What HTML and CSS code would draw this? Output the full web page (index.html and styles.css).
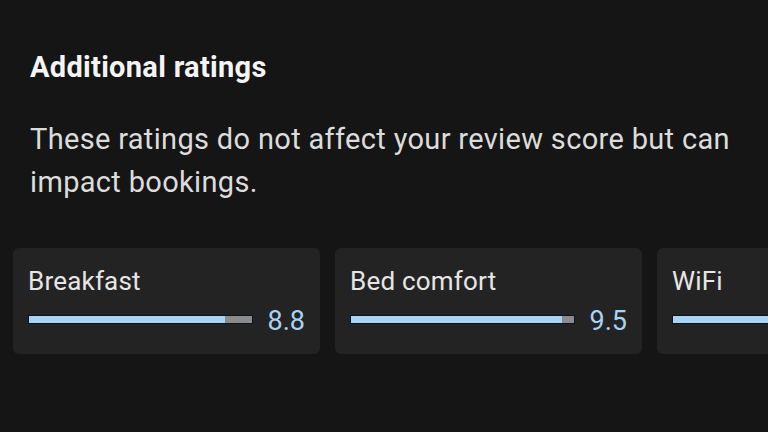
FILE: index.html
```html
<!DOCTYPE html>
<html lang="en">
<head>
    <meta charset="UTF-8">
    <meta name="viewport" content="width=device-width, initial-scale=1.0">
    <title>Additional ratings</title>
    <link rel="stylesheet" href="styles.css">
</head>
<body>
    <section class="ratings">
        <h2 class="ratings-title">Additional ratings</h2>
        <p class="ratings-note">These ratings do not affect your review score but can impact bookings.</p>

        <div class="ratings-list">
            <div class="rating-card">
                <div class="rating-label">Breakfast</div>
                <div class="rating-row">
                    <div class="rating-bar"><div class="rating-fill" style="width: 88%"></div></div>
                    <span class="rating-value">8.8</span>
                </div>
            </div>
            <div class="rating-card">
                <div class="rating-label">Bed comfort</div>
                <div class="rating-row">
                    <div class="rating-bar"><div class="rating-fill" style="width: 95%"></div></div>
                    <span class="rating-value">9.5</span>
                </div>
            </div>
            <div class="rating-card">
                <div class="rating-label">WiFi</div>
                <div class="rating-row">
                    <div class="rating-bar"><div class="rating-fill" style="width: 92%"></div></div>
                    <span class="rating-value">9.2</span>
                </div>
            </div>
        </div>
    </section>
</body>
</html>
```

FILE: styles.css
```css
/* Colours */
:root {
  --bg-color: #151515;
  --card-color: #232323;
  --text-color: #f4f4f4;
  --muted-text: #dcdcdc;
  --accent: #a9d3f5;
  --bar-rest: #8c8c8c;
}

* {
  box-sizing: border-box;
  margin: 0;
  padding: 0;
}

body {
  background-color: var(--bg-color);
  color: var(--text-color);
  font-family: Roboto, "Noto Sans", sans-serif;
  overflow: hidden;
}

/* Header */
.ratings {
  padding-top: 50px;
}

.ratings-title {
  font-size: 29px;
  line-height: 34px;
  font-weight: 700;
  letter-spacing: 0.3px;
  padding-left: 30px;
}

.ratings-note {
  margin-top: 34px;
  padding: 0 30px;
  font-size: 29px;
  line-height: 43px;
  letter-spacing: 0.33px;
  color: var(--muted-text);
}

/* Cards */
.ratings-list {
  display: flex;
  gap: 15px;
  margin-top: 44px;
  padding-left: 13px;
}

.rating-card {
  flex: 0 0 307px;
  background-color: var(--card-color);
  border-radius: 6px;
  padding: 18px 15px 18px;
}

.rating-label {
  font-size: 26px;
  line-height: 30px;
  letter-spacing: 0.2px;
  color: #e6e6e6;
}

.rating-row {
  display: flex;
  align-items: center;
  gap: 15px;
  margin-top: 10px;
}

.rating-bar {
  flex: 1;
  height: 9px;
  margin-top: -4px;
  background-color: var(--bar-rest);
  border: 1px solid #0b1420;
}

.rating-fill {
  height: 100%;
  background-color: var(--accent);
}

.rating-value {
  font-size: 27px;
  line-height: 30px;
  color: var(--accent);
}
```
